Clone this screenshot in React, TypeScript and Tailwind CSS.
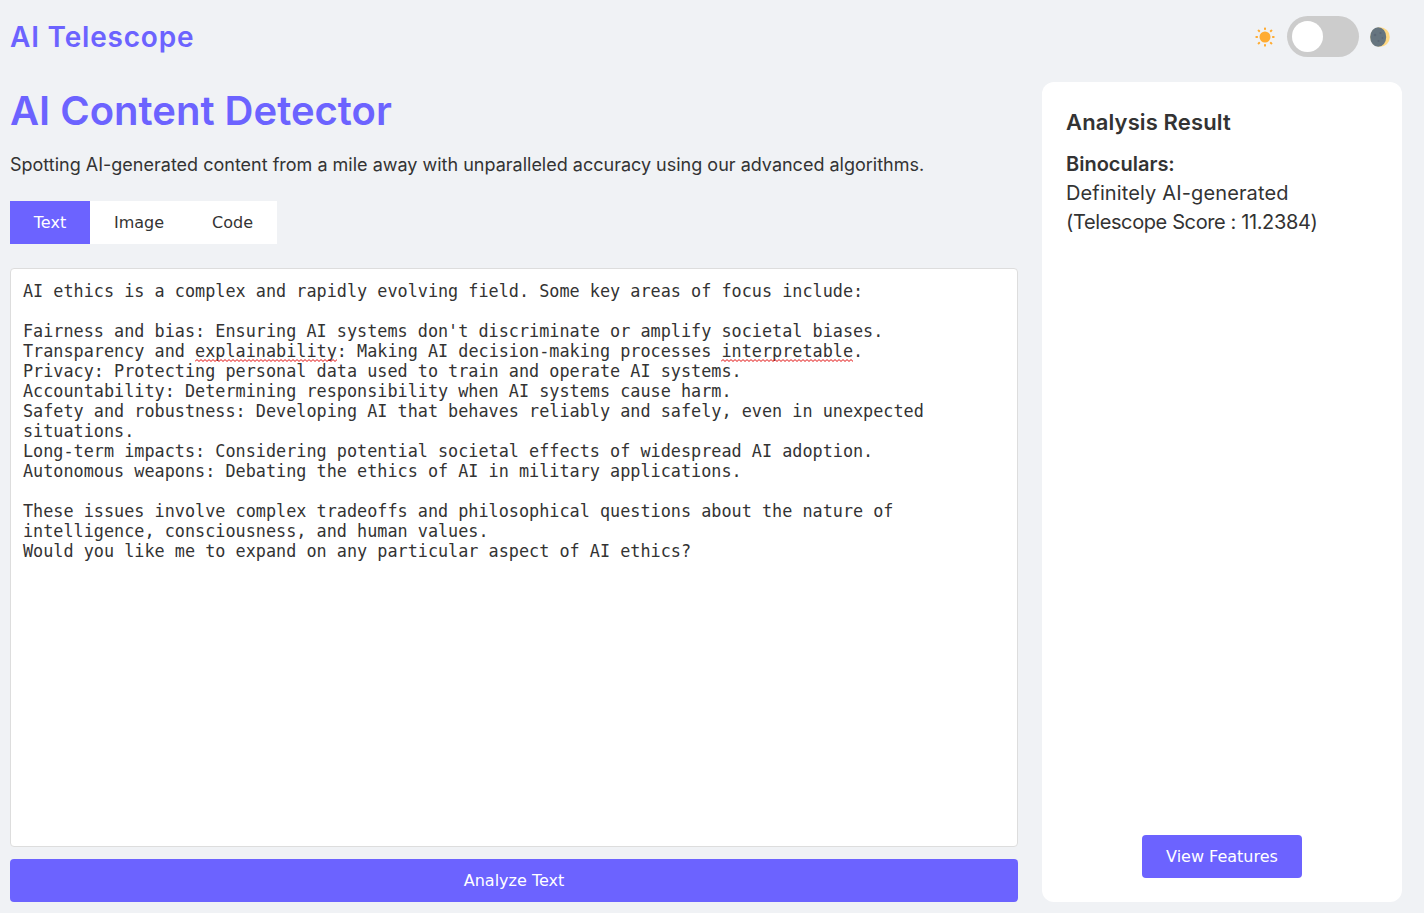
import React from 'react';

// spell-check squiggle: a 4px zigzag, long enough for the longest word
const zigzag = 'M0 2.5' + Array.from({ length: 36 }, (_, i) => ` L${i * 4 + 2} 0.5 L${i * 4 + 4} 2.5`).join('');

function Misspelled({ children }: { children: React.ReactNode }) {
  return (
    <span className="relative">
      {children}
      <svg className="absolute bottom-[-1px] left-0 h-[3px] w-full" aria-hidden="true">
        <path d={zigzag} fill="none" stroke="#e00000" strokeWidth="1" />
      </svg>
    </span>
  );
}

const lines = (
  <>
    {`AI ethics is a complex and rapidly evolving field. Some key areas of focus include:

Fairness and bias: Ensuring AI systems don't discriminate or amplify societal biases.
Transparency and `}
    <Misspelled>explainability</Misspelled>
    {`: Making AI decision-making processes `}
    <Misspelled>interpretable</Misspelled>
    {`.
Privacy: Protecting personal data used to train and operate AI systems.
Accountability: Determining responsibility when AI systems cause harm.
Safety and robustness: Developing AI that behaves reliably and safely, even in unexpected situations.
Long-term impacts: Considering potential societal effects of widespread AI adoption.
Autonomous weapons: Debating the ethics of AI in military applications.

These issues involve complex tradeoffs and philosophical questions about the nature of intelligence, consciousness, and human values.
Would you like me to expand on any particular aspect of AI ethics?`}
  </>
);

function Sun() {
  return (
    <svg width="20" height="20" viewBox="0 0 20 20" fill="#ffac33">
      <circle cx="10" cy="10" r="5.5" />
      <rect x="9" y="0.4" width="2" height="2.6" rx="0.7" />
      <rect x="9" y="17" width="2" height="2.6" rx="0.7" />
      <rect x="0.4" y="9" width="2.6" height="2" rx="0.7" />
      <rect x="17" y="9" width="2.6" height="2" rx="0.7" />
      <rect x="2.6" y="2.8" width="2.6" height="2" rx="0.7" transform="rotate(45 3.9 3.8)" />
      <rect x="14.8" y="15.2" width="2.6" height="2" rx="0.7" transform="rotate(45 16.1 16.2)" />
      <rect x="14.8" y="2.8" width="2.6" height="2" rx="0.7" transform="rotate(-45 16.1 3.8)" />
      <rect x="2.6" y="15.2" width="2.6" height="2" rx="0.7" transform="rotate(-45 3.9 16.2)" />
    </svg>
  );
}

function Moon() {
  return (
    <svg width="20" height="20" viewBox="0 0 20 20">
      <circle cx="10" cy="10" r="9.8" fill="#ffd983" />
      <ellipse cx="8.2" cy="10" rx="8" ry="9.8" fill="#66757f" />
      <circle cx="5" cy="8" r="1.3" fill="#5b6876" />
      <circle cx="10.5" cy="6" r="1.1" fill="#5b6876" />
      <circle cx="8.5" cy="14" r="1.1" fill="#5b6876" />
      <circle cx="12.5" cy="11" r="0.9" fill="#5b6876" />
    </svg>
  );
}

export default function App() {
  return (
    <div className="flex h-[913px] flex-col overflow-hidden bg-[#f0f2f5] font-['Inter',sans-serif] text-[#333]">
      <header className="flex h-[73px] items-center justify-between pl-[10px] pr-[34px]">
        <div className="text-[28px] font-semibold tracking-[0.8px] text-[#6c63ff]">AI Telescope</div>
        <div className="flex items-center">
          <Sun />
          <div className="mr-[11px] ml-3 flex h-[41px] w-[72px] items-center rounded-full bg-[#ccc] pl-[5px]">
            <div className="h-[31px] w-[31px] rounded-full bg-white" />
          </div>
          <Moon />
        </div>
      </header>

      <div className="flex flex-1 gap-6 pb-[11px] pl-[10px] pr-[22px]">
        <main className="flex w-[1008px] flex-col">
          <h1 className="mt-2 text-[40px] leading-[60px] font-semibold text-[#6c63ff]">AI Content Detector</h1>
          <p className="mt-[11px] text-[18px] leading-[26px]">
            Spotting AI-generated content from a mile away with unparalleled accuracy using our advanced algorithms.
          </p>
          <div className="mt-[23px] flex h-[43px] w-fit bg-white font-['DejaVu_Sans',sans-serif] text-base">
            <button className="w-20 bg-[#6c63ff] text-white">Text</button>
            <button className="w-[98px]">Image</button>
            <button className="w-[89px]">Code</button>
          </div>
          <div className="mt-6 flex-1 rounded border border-[#ddd] bg-white px-3 py-3 font-['DejaVu_Sans_Mono',monospace] text-[16.82px] leading-5 whitespace-pre-wrap">
            {lines}
          </div>
          <button className="mt-3 h-[43px] rounded bg-[#6c63ff] font-['DejaVu_Sans',sans-serif] text-base text-white">Analyze Text</button>
        </main>

        <aside className="mt-[9px] flex w-[360px] flex-col rounded-xl bg-white p-6">
          <h2 className="text-[22px] leading-[33px] font-semibold tracking-[0.13px]">Analysis Result</h2>
          <div className="mt-[11px] text-xl leading-[29px]">
            <strong className="block font-semibold">Binoculars:</strong>
            <div className="tracking-[0.13px]">Definitely AI-generated</div>
            <div className="tracking-[-0.38px]">(Telescope Score : 11.2384)</div>
          </div>
          <button className="mx-auto mt-auto h-[43px] w-40 rounded bg-[#6c63ff] font-['DejaVu_Sans',sans-serif] text-base text-white">View Features</button>
        </aside>
      </div>
    </div>
  );
}
